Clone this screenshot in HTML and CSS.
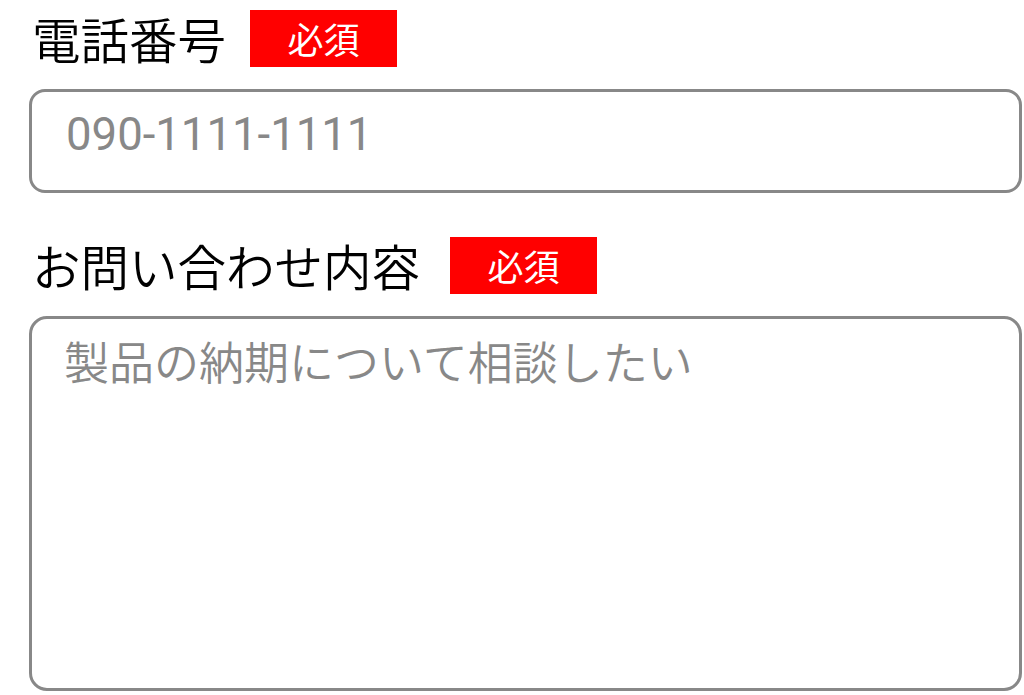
FILE: index.html
```html
<!DOCTYPE html>
<html lang="ja">
<head>
<meta charset="utf-8">
<link rel="stylesheet" href="styles.css">
</head>
<body>
<form class="form">
  <div class="field">
    <div class="label-row">
      <label class="label" for="tel">電話番号</label>
      <span class="badge">必須</span>
    </div>
    <input class="input" id="tel" type="tel" placeholder="090-1111-1111">
  </div>
  <div class="field">
    <div class="label-row label-row-wide">
      <label class="label" for="msg">お問い合わせ内容</label>
      <span class="badge">必須</span>
    </div>
    <textarea class="textarea" id="msg" placeholder="製品の納期について相談したい"></textarea>
  </div>
</form>
</body>
</html>
```
FILE: styles.css
```css
html, body {
  margin: 0;
  padding: 0;
  background: #ffffff;
}
body {
  font-family: "Noto Sans CJK JP", "Noto Sans", sans-serif;
  overflow: hidden;
}
.form {
  display: flex;
  flex-direction: column;
  gap: 44px;
  padding: 10px 0 0 29px;
  width: 993px;
}
.field {
  display: flex;
  flex-direction: column;
  gap: 22px;
}
.label-row {
  display: flex;
  align-items: center;
  gap: 24px;
  height: 57px;
}
.label-row-wide {
  gap: 30px;
}
.label {
  font-size: 48.5px;
  font-weight: 350;
  color: #000;
  line-height: 57px;
  padding-left: 3px;
}
.badge {
  background: #ff0000;
  color: #fff;
  font-size: 36px;
  font-weight: 400;
  line-height: 57px;
  height: 57px;
  width: 147px;
  text-align: center;
}
.input, .textarea {
  box-sizing: border-box;
  width: 993px;
  border: 3px solid #888888;
  border-radius: 16px;
  background: #fff;
  font-family: "Noto Sans CJK JP", "Noto Sans", sans-serif;
  font-size: 45px;
  font-weight: 350;
  color: #000;
  padding: 0 32px;
  outline: none;
  margin: 0;
}
.input {
  height: 104px;
  padding-bottom: 14px;
  font-family: Roboto, "Noto Sans CJK JP", sans-serif;
  font-size: 45.5px;
  font-weight: 400;
  padding-left: 34px;
}
.textarea {
  height: 375px;
  padding-top: 9px;
  border-radius: 18px;
  resize: none;
  display: block;
}
.input::placeholder, .textarea::placeholder {
  color: #888888;
  opacity: 1;
}
```
